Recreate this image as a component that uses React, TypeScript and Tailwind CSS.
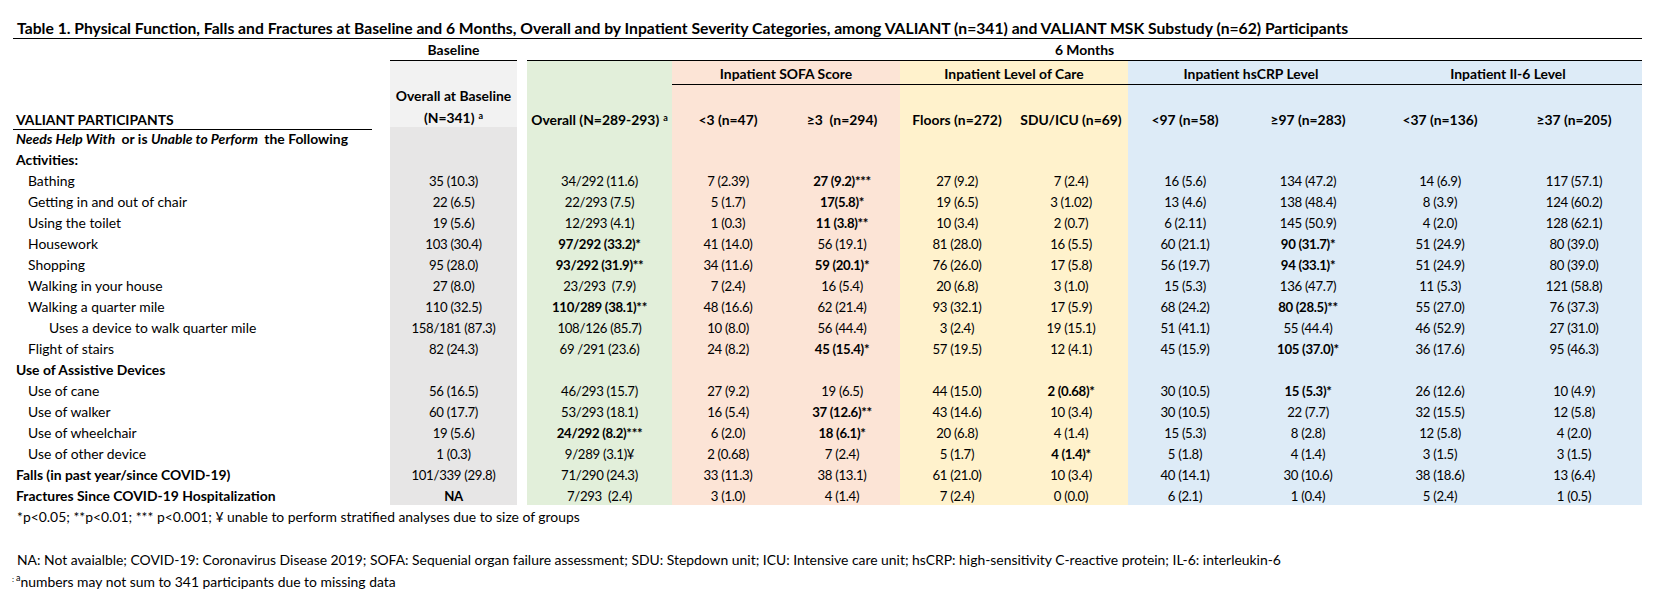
const cols =
  "grid grid-cols-[359px_18px_127px_10px_145px_112px_116px_114px_114px_114px_132px_132px_136px]"

const GRAY = "bg-[#e7e6e6]"
const GREEN = "bg-[#e2efda]"
const PINK = "bg-[#fce4d6]"
const YELLOW = "bg-[#fff2cc]"
const BLUE = "bg-[#ddebf7]"

// b: prefix marks a bold value
type Row = { label: React.ReactNode; indent?: 0 | 1 | 2; bold?: boolean; v?: string[] }

const rows: Row[] = [
  {
    label: (
      <>
        <i>Needs Help With </i> or is <i>Unable to Perform </i> the Following
      </>
    ),
    bold: true,
  },
  { label: "Activities:", bold: true },
  { label: "Bathing", indent: 1, v: ["35 (10.3)", "34/292 (11.6)", "7 (2.39)", "b:27 (9.2)***", "27 (9.2)", "7 (2.4)", "16 (5.6)", "134 (47.2)", "14 (6.9)", "117 (57.1)"] },
  { label: "Getting in and out of chair", indent: 1, v: ["22 (6.5)", "22/293 (7.5)", "5 (1.7)", "b:17(5.8)*", "19 (6.5)", "3 (1.02)", "13 (4.6)", "138 (48.4)", "8 (3.9)", "124 (60.2)"] },
  { label: "Using the toilet", indent: 1, v: ["19 (5.6)", "12/293 (4.1)", "1 (0.3)", "b:11 (3.8)**", "10 (3.4)", "2 (0.7)", "6 (2.11)", "145 (50.9)", "4 (2.0)", "128 (62.1)"] },
  { label: "Housework", indent: 1, v: ["103 (30.4)", "b:97/292 (33.2)*", "41 (14.0)", "56 (19.1)", "81 (28.0)", "16 (5.5)", "60 (21.1)", "b:90 (31.7)*", "51 (24.9)", "80 (39.0)"] },
  { label: "Shopping", indent: 1, v: ["95 (28.0)", "b:93/292 (31.9)**", "34 (11.6)", "b:59 (20.1)*", "76 (26.0)", "17 (5.8)", "56 (19.7)", "b:94 (33.1)*", "51 (24.9)", "80 (39.0)"] },
  { label: "Walking in your house", indent: 1, v: ["27 (8.0)", "23/293  (7.9)", "7 (2.4)", "16 (5.4)", "20 (6.8)", "3 (1.0)", "15 (5.3)", "136 (47.7)", "11 (5.3)", "121 (58.8)"] },
  { label: "Walking a quarter mile", indent: 1, v: ["110 (32.5)", "b:110/289 (38.1)**", "48 (16.6)", "62 (21.4)", "93 (32.1)", "17 (5.9)", "68 (24.2)", "b:80 (28.5)**", "55 (27.0)", "76 (37.3)"] },
  { label: "Uses a device to walk quarter mile", indent: 2, v: ["158/181 (87.3)", "108/126 (85.7)", "10 (8.0)", "56 (44.4)", "3 (2.4)", "19 (15.1)", "51 (41.1)", "55 (44.4)", "46 (52.9)", "27 (31.0)"] },
  { label: "Flight of stairs", indent: 1, v: ["82 (24.3)", "69 /291 (23.6)", "24 (8.2)", "b:45 (15.4)*", "57 (19.5)", "12 (4.1)", "45 (15.9)", "b:105 (37.0)*", "36 (17.6)", "95 (46.3)"] },
  { label: "Use of Assistive Devices", bold: true },
  { label: "Use of cane", indent: 1, v: ["56 (16.5)", "46/293 (15.7)", "27 (9.2)", "19 (6.5)", "44 (15.0)", "b:2 (0.68)*", "30 (10.5)", "b:15 (5.3)*", "26 (12.6)", "10 (4.9)"] },
  { label: "Use of walker", indent: 1, v: ["60 (17.7)", "53/293 (18.1)", "16 (5.4)", "b:37 (12.6)**", "43 (14.6)", "10 (3.4)", "30 (10.5)", "22 (7.7)", "32 (15.5)", "12 (5.8)"] },
  { label: "Use of wheelchair", indent: 1, v: ["19 (5.6)", "b:24/292 (8.2)***", "6 (2.0)", "b:18 (6.1)*", "20 (6.8)", "4 (1.4)", "15 (5.3)", "8 (2.8)", "12 (5.8)", "4 (2.0)"] },
  { label: "Use of other device", indent: 1, v: ["1 (0.3)", "9/289 (3.1)¥", "2 (0.68)", "7 (2.4)", "5 (1.7)", "b:4 (1.4)*", "5 (1.8)", "4 (1.4)", "3 (1.5)", "3 (1.5)"] },
  { label: "Falls (in past year/since COVID-19)", bold: true, v: ["101/339 (29.8)", "71/290 (24.3)", "33 (11.3)", "38 (13.1)", "61 (21.0)", "10 (3.4)", "40 (14.1)", "30 (10.6)", "38 (18.6)", "13 (6.4)"] },
  { label: "Fractures Since COVID-19 Hospitalization", bold: true, v: ["b:NA", "7/293  (2.4)", "3 (1.0)", "4 (1.4)", "7 (2.4)", "0 (0.0)", "6 (2.1)", "1 (0.4)", "5 (2.4)", "1 (0.5)"] },
]

function Val({ s, className = "" }: { s?: string; className?: string }) {
  const bold = s?.startsWith("b:")
  const text = bold ? s!.slice(2) : s
  return (
    <div
      className={`flex items-center justify-center whitespace-pre pt-[2px] text-[13.2px] tracking-[-0.3px] ${
        bold ? "font-bold" : ""
      } ${className}`}
    >
      {text}
    </div>
  )
}

function BodyRow({ r }: { r: Row }) {
  const v = r.v ?? []
  const pad = r.indent === 2 ? "pl-[36px]" : r.indent === 1 ? "pl-[15px]" : "pl-[3px]"
  return (
    <div className={`${cols} h-[21px]`}>
      <div className={`flex items-center whitespace-pre pt-[2px] ${pad} ${r.bold ? "font-bold" : ""}`}>{r.label}</div>
      <div />
      <Val s={v[0]} className={GRAY} />
      <div />
      <Val s={v[1]} className={GREEN} />
      <Val s={v[2]} className={PINK} />
      <Val s={v[3]} className={PINK} />
      <Val s={v[4]} className={YELLOW} />
      <Val s={v[5]} className={YELLOW} />
      <Val s={v[6]} className={BLUE} />
      <Val s={v[7]} className={BLUE} />
      <Val s={v[8]} className={BLUE} />
      <Val s={v[9]} className={BLUE} />
    </div>
  )
}

export default function App() {
  return (
    <div className="w-[1668px] h-[610px] bg-white text-black font-[Lato,sans-serif] text-[13.9px] leading-[18px]">
      <div className="ml-[13px] w-[1629px]">
        {/* title */}
        <div className="h-[39px] pt-[18px] pl-[4px] border-b border-black font-bold whitespace-nowrap text-[15.7px] leading-[20px]">
          Table 1. Physical Function, Falls and Fractures at Baseline and 6 Months, Overall and by Inpatient Severity
          Categories, among VALIANT (n=341) and VALIANT MSK Substudy (n=62) Participants
        </div>

        {/* period headers */}
        <div className={`${cols} h-[22px] font-bold`}>
          <div />
          <div />
          <div className="flex items-center justify-center border-b border-black">Baseline</div>
          <div />
          <div className="col-span-9 flex items-center justify-center border-b border-black">6 Months</div>
        </div>

        {/* group headers */}
        <div className={`${cols} h-[24px] font-bold`}>
          <div />
          <div />
          <div className="bg-[#f2f2f2]" />
          <div />
          <div className={GREEN} />
          <div className={`col-span-2 flex items-end justify-center pb-[1px] border-b border-black ${PINK}`}>
            Inpatient SOFA Score
          </div>
          <div className={`col-span-2 flex items-end justify-center pb-[1px] border-b border-black ${YELLOW}`}>
            Inpatient Level of Care
          </div>
          <div className={`col-span-2 flex items-end justify-center pb-[1px] border-b border-black ${BLUE}`}>
            Inpatient hsCRP Level
          </div>
          <div className={`col-span-2 flex items-end justify-center pb-[1px] border-b border-black ${BLUE}`}>
            Inpatient Il-6 Level
          </div>
        </div>

        {/* column headers */}
        <div className={`${cols} h-[42px] font-bold whitespace-pre`}>
          <div className="flex items-end pl-[3px] border-b border-black">VALIANT PARTICIPANTS</div>
          <div />
          <div className="flex flex-col items-center justify-end leading-[22px] border-b border-black bg-[#f2f2f2]">
            <span>Overall at Baseline</span>
            <span>
              (N=341)<sup className="text-[9px] ml-[4px]">a</sup>
            </span>
          </div>
          <div />
          <div className={`flex items-end justify-center border-b border-black ${GREEN}`}>
            <span>
              Overall (N=289-293)<sup className="text-[9px] ml-[4px]">a</sup>
            </span>
          </div>
          <div className={`flex items-end justify-center border-b border-black ${PINK}`}>{"<3 (n=47)"}</div>
          <div className={`flex items-end justify-center border-b border-black ${PINK}`}>{"≥3  (n=294)"}</div>
          <div className={`flex items-end justify-center border-b border-black ${YELLOW}`}>Floors (n=272)</div>
          <div className={`flex items-end justify-center border-b border-black ${YELLOW}`}>SDU/ICU (n=69)</div>
          <div className={`flex items-end justify-center border-b border-black ${BLUE}`}>{"<97 (n=58)"}</div>
          <div className={`flex items-end justify-center border-b border-black ${BLUE}`}>{"≥97 (n=283)"}</div>
          <div className={`flex items-end justify-center border-b border-black ${BLUE}`}>{"<37 (n=136)"}</div>
          <div className={`flex items-end justify-center border-b border-black ${BLUE}`}>{"≥37 (n=205)"}</div>
        </div>

        {/* body */}
        {rows.map((r, i) => (
          <BodyRow key={i} r={r} />
        ))}
      </div>

      {/* notes */}
      <div className="pl-[17px] whitespace-nowrap">
        <div className="mt-[3px]">
          *p&lt;0.05; **p&lt;0.01; *** p&lt;0.001; ¥ unable to perform stratified analyses due to size of groups
        </div>
        <div className="mt-[25px]">
          NA: Not avaialble; COVID-19: Coronavirus Disease 2019; SOFA: Sequenial organ failure assessment; SDU: Stepdown
          unit; ICU: Intensive care unit; hsCRP: high-sensitivity C-reactive protein; IL-6: interleukin-6
        </div>
        <div className="mt-[4px] -ml-[5px] flex items-start">
          <span className="text-[8px] leading-[10px] mt-[1px]">:</span>
          <span className="text-[9px] leading-[10px] ml-[2px]">a</span>
          <span>numbers may not sum to 341 participants due to missing data</span>
        </div>
      </div>
    </div>
  )
}
